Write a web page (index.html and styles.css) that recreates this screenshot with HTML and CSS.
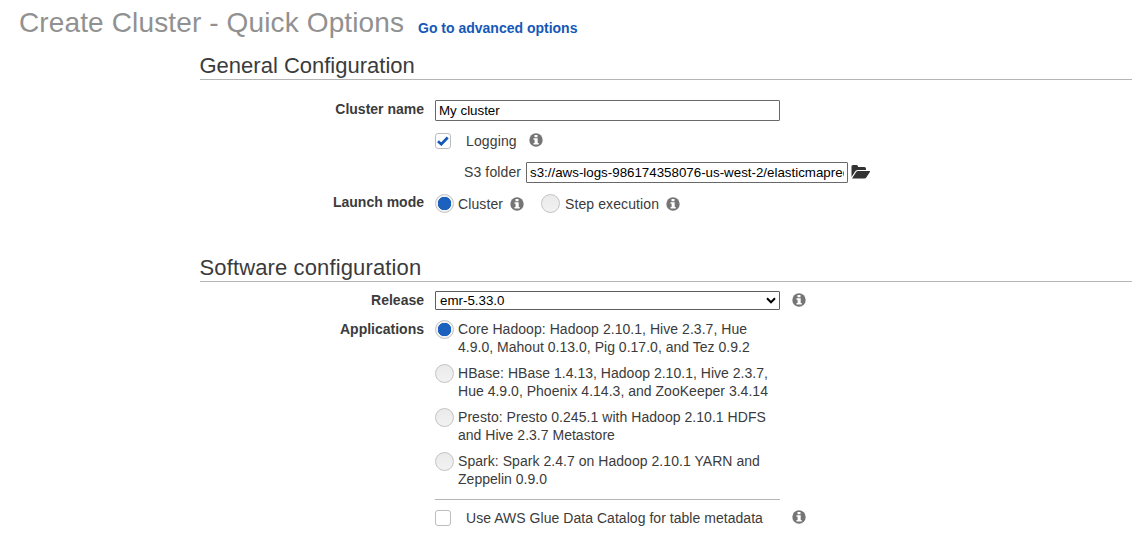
FILE: index.html
```html
<!DOCTYPE html>
<html lang="en">
<head>
<meta charset="utf-8">
<title>Create Cluster - Quick Options</title>
<link rel="stylesheet" href="styles.css">
</head>
<body>
<svg class="sprite" aria-hidden="true">
  <symbol id="info" viewBox="0 0 14 14">
    <circle cx="7" cy="7" r="6.7" fill="#757575"/>
    <path d="M5.500 2h3v2.200h-3zM4.500 5.200h4.200v4.800h1v1.500H4.500v-1.500h1.100V6.700H4.500z" fill="#fff"/>
  </symbol>
  <symbol id="folder" viewBox="0 0 20 16">
    <path d="M.5 13V2.500Q.5 1 2 1h3.500Q7 1 7 2.500V3h6.500Q15 3 15 4.500V6H7Q5.500 6 4.500 7z" fill="#333"/>
    <path d="M1 14.500 5 8.300Q5.800 7 7 7h11.500q1 0 .4 1l-3.600 5.500q-.7 1-2 1z" fill="#333"/>
  </symbol>
</svg>
<header class="page-header">
  <h1 class="page-title">Create Cluster - Quick Options</h1>
  <a class="advanced-link">Go to advanced options</a>
</header>
<main class="content">
  <section class="general">
    <h2 class="section-title general-title">General Configuration</h2>
    <div class="row name-row">
      <div class="label name-label">Cluster name</div>
      <input class="text-input name-input" value="My cluster">
    </div>
    <div class="row logging-row">
      <div class="field check-field">
        <span class="checkbox"><svg class="tick" viewBox="0 0 12 10"><path d="M1 5.200 4.300 8.200 10.700 1.500" fill="none" stroke="#1458b7" stroke-width="2.700"/></svg></span>
        <span class="logging-text">Logging</span>
        <svg class="info raised"><use href="#info"/></svg>
      </div>
    </div>
    <div class="row folder-row">
      <div class="field folder-field">
        <span class="folder-text">S3 folder</span>
        <input class="text-input folder-input" value="s3://aws-logs-986174358076-us-west-2/elasticmapreduce/">
        <svg class="folder-icon"><use href="#folder"/></svg>
      </div>
    </div>
    <div class="row mode-row">
      <div class="label mode-label">Launch mode</div>
      <div class="field mode-field">
        <span class="radio selected"></span><span class="cluster-text">Cluster</span><svg class="info"><use href="#info"/></svg>
        <span class="radio step-radio"></span><span class="step-text">Step execution</span><svg class="info"><use href="#info"/></svg>
      </div>
    </div>
  </section>
  <section class="software">
    <h2 class="section-title software-title">Software configuration</h2>
    <div class="row release-row">
      <div class="label release-label">Release</div>
      <div class="field release-field">
        <div class="select"><span class="select-text">emr-5.33.0</span><svg class="chevron" viewBox="0 0 10 7"><path d="m1 1.300 4 4 4-4" fill="none" stroke="#000" stroke-width="2"/></svg></div>
        <svg class="info raised"><use href="#info"/></svg>
      </div>
    </div>
    <div class="row apps-row">
      <div class="label apps-label">Applications</div>
      <div class="apps">
        <div class="app"><span class="radio selected"></span><div><div class="line wide">Core Hadoop: Hadoop 2.10.1, Hive 2.3.7, Hue</div><div class="line">4.9.0, Mahout 0.13.0, Pig 0.17.0, and Tez 0.9.2</div></div></div>
        <div class="app"><span class="radio"></span><div><div class="line">HBase: HBase 1.4.13, Hadoop 2.10.1, Hive 2.3.7,</div><div class="line">Hue 4.9.0, Phoenix 4.14.3, and ZooKeeper 3.4.14</div></div></div>
        <div class="app"><span class="radio"></span><div><div class="line wide">Presto: Presto 0.245.1 with Hadoop 2.10.1 HDFS</div><div class="line">and Hive 2.3.7 Metastore</div></div></div>
        <div class="app"><span class="radio"></span><div><div class="line wide">Spark: Spark 2.4.7 on Hadoop 2.10.1 YARN and</div><div class="line">Zeppelin 0.9.0</div></div></div>
      </div>
    </div>
    <div class="row glue-row">
      <div class="field glue-field">
        <span class="checkbox"></span>
        <span class="glue-text">Use AWS Glue Data Catalog for table metadata</span>
        <svg class="info raised"><use href="#info"/></svg>
      </div>
    </div>
  </section>
</main>
</body>
</html>
```
FILE: styles.css
```css
* { box-sizing: border-box; }
body {
  margin: 0;
  height: 547px;
  overflow: hidden;
  background: #fff;
  color: #3b3b3b;
  font: 14px/18px "Liberation Sans", Arial, sans-serif;
}
.sprite { display: none; }
.page-header { display: flex; height: 48px; padding-left: 19px; white-space: nowrap; }
.page-title { width: 399px; margin: 0; padding-top: 7px; font-size: 28px; line-height: 32px; font-weight: 400; letter-spacing: .13px; color: #919191; }
.advanced-link { padding-top: 19px; font-weight: 700; color: #1458b7; }
.content { margin: 0 16px 0 200px; }
.section-title { height: 32px; margin: 0; padding-top: 5px; border-bottom: 1px solid #b5b5b5; font-size: 22px; line-height: 26px; font-weight: 400; text-indent: -.5px; }
.software-title { letter-spacing: .13px; }
.row { display: grid; grid-template-columns: 224px 1fr; column-gap: 11px; }
.label { text-align: right; font-weight: 700; }
.field { grid-column: 2; display: flex; align-items: center; }
.text-input { height: 21px; margin: 0; padding: 0 3px; border: 1px solid #696969; border-radius: 1px; background: #fff; color: #000; font: 13.33px "Liberation Sans", Arial, sans-serif; }
.name-row { padding-top: 20px; height: 51px; }
.name-input { width: 345px; }
.logging-row { height: 20px; }
.checkbox { width: 16px; height: 16px; margin-right: 15px; border: 1px solid #bdbdbd; border-radius: 3px; display: grid; place-items: center; flex: none; }
.tick { width: 12px; height: 10px; }
.info { width: 14px; height: 14px; flex: none; }
.raised { margin-bottom: 2px; }
.logging-text { width: 63px; letter-spacing: .13px; }
.folder-row { height: 42px; padding-top: 1px; }
.folder-field { padding-left: 29px; }
.folder-text { width: 62px; margin-bottom: 1px; letter-spacing: .12px; }
.folder-input { width: 322px; }
.folder-icon { width: 20px; height: 16px; margin: 0 0 1px 3px; }
.mode-row { height: 21px; }
.mode-label { height: 18px; }
.mode-field { height: 21px; }
.radio { width: 19px; height: 19px; flex: none; border: 1px solid #c3c3c3; border-radius: 50%; background: linear-gradient(#eaeaea, #f2f2f2); }
.selected { background: radial-gradient(circle, #1b61bd 0 6.5px, #f1f1f1 7px); }
.cluster-text { margin-left: 4px; width: 52px; padding-top: 1px; letter-spacing: .1px; }
.step-radio { margin-left: 17px; }
.step-text { margin-left: 5px; width: 101px; padding-top: 1px; letter-spacing: .1px; }
.software { padding-top: 36px; }
.release-row { height: 38px; padding-top: 9px; }
.release-field { height: 19px; }
.select { display: flex; align-items: center; justify-content: space-between; width: 345px; height: 19px; margin-right: 12px; padding: 0 3px 0 4px; border: 1px solid #5e5e5e; border-radius: 1px; color: #000; font-size: 13.33px; }
.chevron { width: 10px; height: 7px; }
.apps { width: 345px; height: 180px; border-bottom: 1px solid #b5b5b5; }
.app { display: flex; gap: 4px; height: 44px; white-space: nowrap; }
.line { letter-spacing: .02px; }
.wide { letter-spacing: .045px; }
.glue-row { padding-top: 9px; }
.glue-text { width: 326px; white-space: nowrap; letter-spacing: .04px; }
```
